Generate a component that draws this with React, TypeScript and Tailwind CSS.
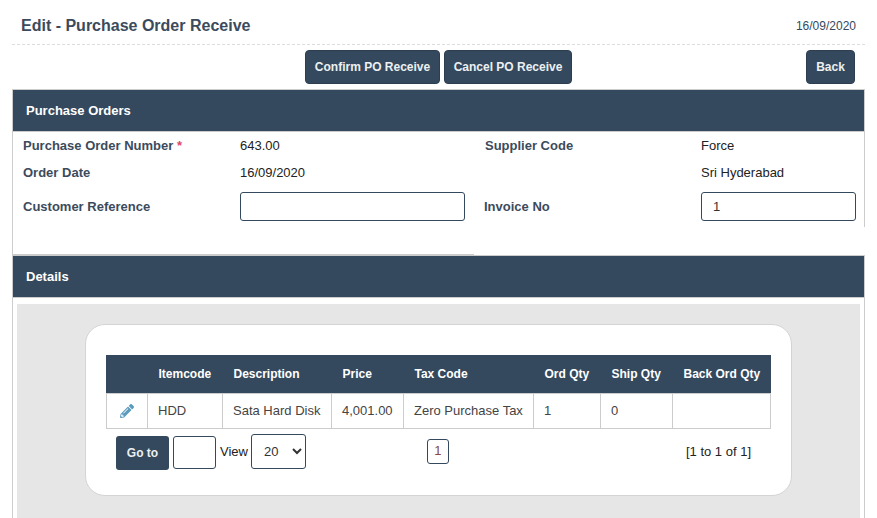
import React from "react";
import { FaPencilAlt } from "react-icons/fa";

const NAVY = "bg-[#34495e]";

const ActionButton: React.FC<{ label: string; className?: string }> = ({ label, className }) => (
  <button
    className={`h-[34px] rounded-[4px] border border-[#2c3e50] ${NAVY} text-[12px] font-bold text-[#ecf0f1] ${className ?? ""}`}
  >
    {label}
  </button>
);

const PanelHeader: React.FC<{ title: string }> = ({ title }) => (
  <div className={`flex h-[41px] items-center ${NAVY} pl-[13px] text-[13px] font-bold text-white`}>{title}</div>
);

const columns = [
  { label: "", width: "w-[41px]" },
  { label: "Itemcode", width: "w-[75px]" },
  { label: "Description", width: "w-[109px]" },
  { label: "Price", width: "w-[72px]" },
  { label: "Tax Code", width: "w-[130px]" },
  { label: "Ord Qty", width: "w-[67px]" },
  { label: "Ship Qty", width: "w-[72px]" },
  { label: "Back Ord Qty", width: "w-[98px]" },
];

const App: React.FC = () => {
  return (
    <div className="h-[518px] w-[877px] overflow-hidden bg-white font-['Liberation_Sans',Arial,sans-serif] text-[#333]">
      <div className="px-[12px]">
        <div className="flex h-[45px] items-center justify-between border-b border-dashed border-[#ddd] px-[9px] pt-[8px]">
          <span className="text-[16px] font-bold text-[#3c4b5c]">Edit - Purchase Order Receive</span>
          <span className="text-[12px] text-[#34495e]">16/09/2020</span>
        </div>

        <div className="flex h-[44px] items-start pt-[5px]">
          <div className="ml-[293px] flex gap-[4px]">
            <ActionButton label="Confirm PO Receive" className="w-[135px]" />
            <ActionButton label="Cancel PO Receive" className="w-[128px]" />
          </div>
          <ActionButton label="Back" className="ml-[234px] w-[49px]" />
        </div>

        <div className="w-[853px] border-t border-[#ccc]">
          <div className="border-x border-[#ccc]">
            <PanelHeader title="Purchase Orders" />
          </div>
          <div className="border-l border-[#ccc]">
            <div className="h-[96px] border-t border-r border-[#ccc] pl-[10px] text-[13px]">
              <div className="flex h-[27px] items-center">
                <span className="w-[217px] font-bold text-[#3c4b5c]">
                  Purchase Order Number <span className="text-[#e0476b]">*</span>
                </span>
                <span className="w-[245px] text-[#222]">643.00</span>
                <span className="w-[216px] font-bold text-[#3c4b5c]">Supplier Code</span>
                <span className="text-[#222]">Force</span>
              </div>
              <div className="flex h-[27px] items-center">
                <span className="w-[217px] font-bold text-[#3c4b5c]">Order Date</span>
                <span className="w-[461px] text-[#222]">16/09/2020</span>
                <span className="text-[#222]">Sri Hyderabad</span>
              </div>
              <div className="mt-[6px] flex h-[29px] items-center">
                <span className="w-[217px] font-bold text-[#3c4b5c]">Customer Reference</span>
                <input className="h-[29px] w-[225px] rounded-[3px] border border-[#34495e] bg-white" />
                <span className="ml-[19px] w-[217px] font-bold text-[#3c4b5c]">Invoice No</span>
                <input
                  defaultValue="1"
                  className="-mr-[4px] h-[29px] w-[155px] rounded-[3px] border border-[#34495e] bg-white pl-[11px] text-[13px] text-[#333]"
                />
              </div>
            </div>
            <div className="h-[28px] w-[461px] border-b border-[#ccc]" />
          </div>
          <div className="border-x border-t border-[#ccc]">
            <PanelHeader title="Details" />
          </div>
          <div className="border-x border-t border-[#ccc] px-[4px] pt-[6px]">
            <div className="h-[240px] bg-[#e6e6e6] pl-[68px] pt-[20px]">
              <div className="h-[172px] w-[707px] rounded-[20px] border border-[#d4d4d4] bg-white pl-[20px] pt-[30px]">
                <table className="w-[664px] table-fixed border-collapse text-[13px]">
                  <thead>
                    <tr className={`h-[38px] ${NAVY} text-white`}>
                      {columns.map((col) => (
                        <th
                          key={col.label}
                          className={`${col.width} pl-[11px] text-left text-[12px] font-bold first:shadow-[-1px_0_0_#34495e]`}
                        >
                          {col.label}
                        </th>
                      ))}
                    </tr>
                  </thead>
                  <tbody>
                    <tr className="h-[35px] text-[#444]">
                      <td className="border border-[#ccc]">
                        <FaPencilAlt className="ml-[13px] text-[14px] text-[#5b9bbd]" />
                      </td>
                      <td className="border border-[#ccc] pl-[10px]">HDD</td>
                      <td className="border border-[#ccc] pl-[10px]">Sata Hard Disk</td>
                      <td className="border border-[#ccc] pl-[10px]">4,001.00</td>
                      <td className="border border-[#ccc] pl-[10px]">Zero Purchase Tax</td>
                      <td className="border border-[#ccc] pl-[10px]">1</td>
                      <td className="border border-[#ccc] pl-[10px]">0</td>
                      <td className="border border-[#ccc]" />
                    </tr>
                  </tbody>
                </table>
                <div className="flex items-start pt-[5px] text-[13px]">
                  <button
                    className={`ml-[10px] mt-[2px] h-[34px] w-[53px] rounded-[3px] ${NAVY} pt-[1px] text-[12px] font-bold text-[#ecf0f1]`}
                  >
                    Go to
                  </button>
                  <input className="ml-[4px] mt-[2px] h-[33px] w-[43px] rounded-[3px] border border-[#34495e] bg-white" />
                  <span className="ml-[4px] mt-[8px] text-[#222]">View</span>
                  <select
                    defaultValue="20"
                    className="ml-[3px] h-[35px] w-[55px] rounded-[3px] border border-[#34495e] bg-white pl-[8px] text-[13px] text-[#333]"
                  >
                    <option value="20">20</option>
                  </select>
                  <span className="ml-[121px] mt-[5px] flex h-[25px] w-[22px] items-center justify-center rounded-[3px] border border-[#34495e] text-[#8a4a3a]">
                    1
                  </span>
                  <span className="ml-[237px] mt-[8px] text-[#222]">[1 to 1 of 1]</span>
                </div>
              </div>
            </div>
          </div>
        </div>
      </div>
    </div>
  );
};

export default App;
